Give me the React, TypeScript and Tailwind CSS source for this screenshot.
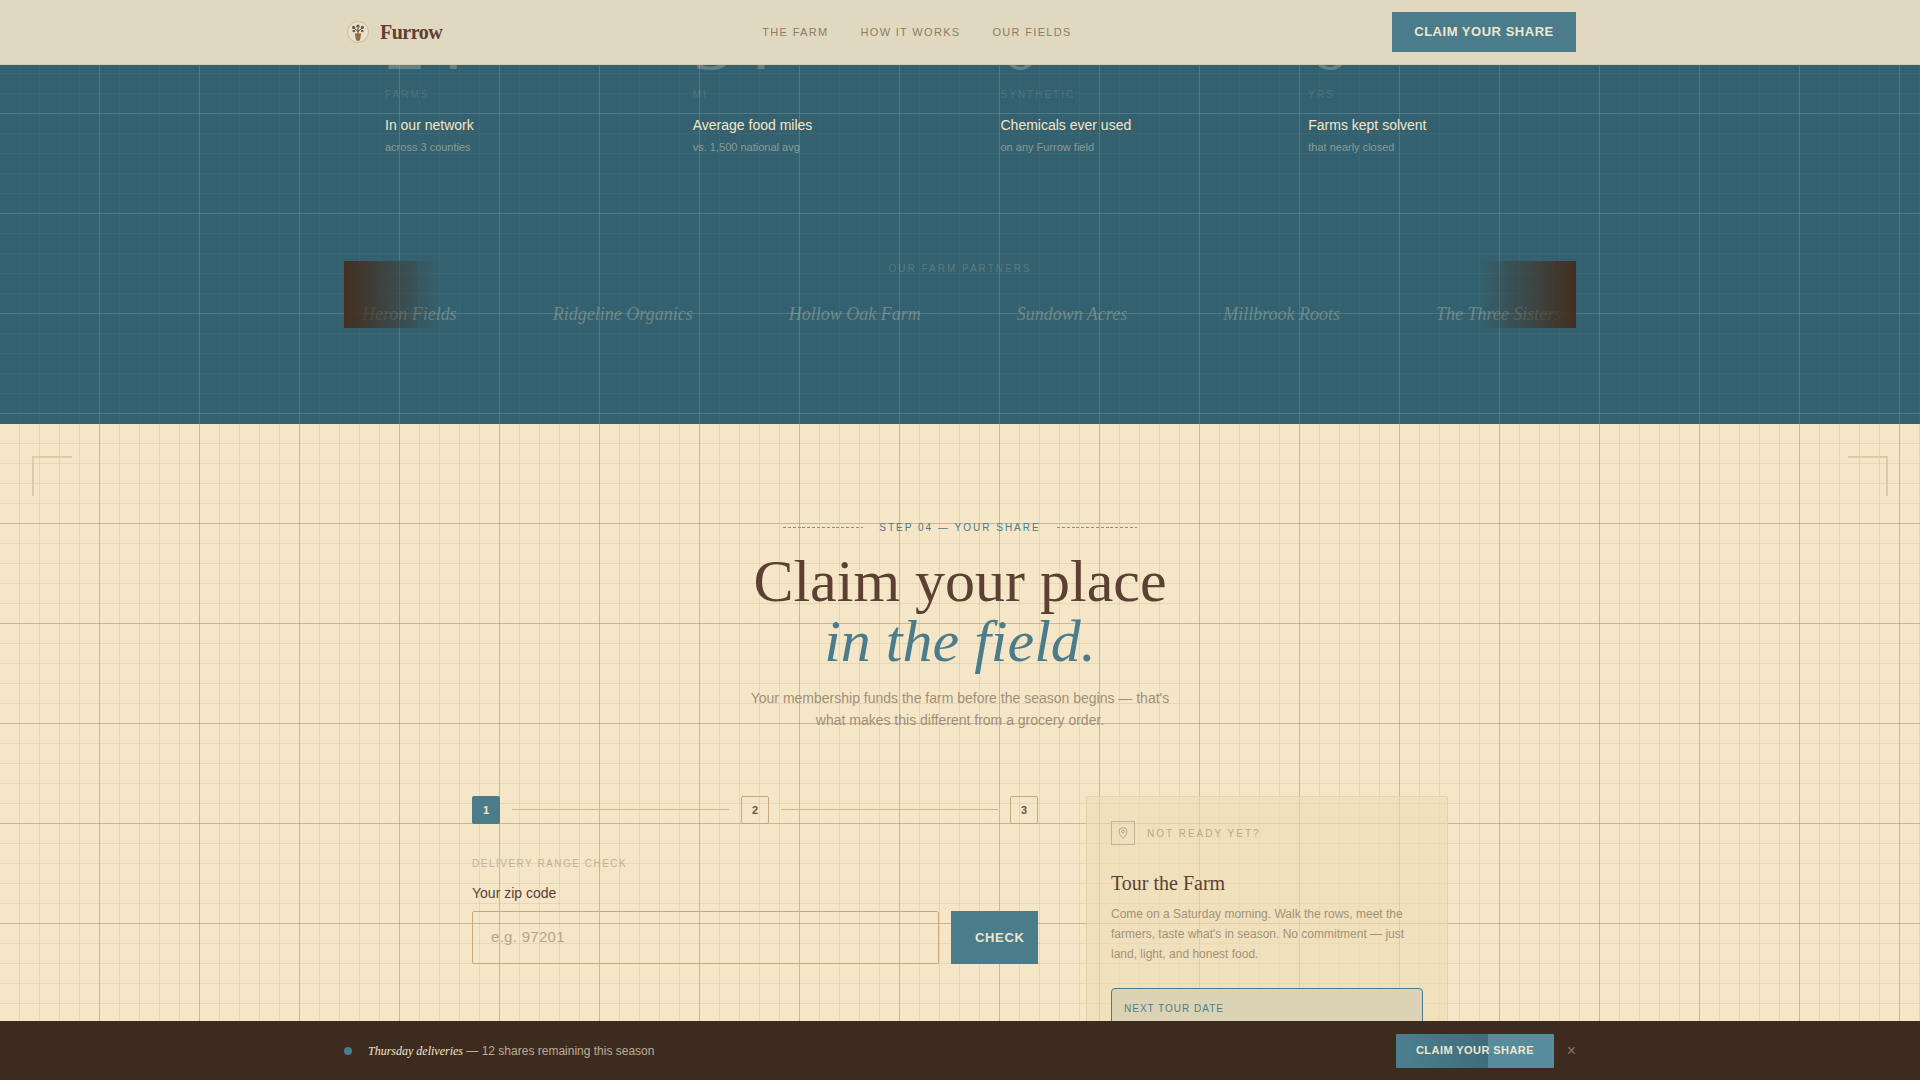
const stats = [
  { num: "24", unit: "FARMS", title: "In our network", note: "across 3 counties" },
  { num: "34", unit: "MI", title: "Average food miles", note: "vs. 1,500 national avg" },
  { num: "0", unit: "SYNTHETIC", title: "Chemicals ever used", note: "on any Furrow field" },
  { num: "6", unit: "YRS", title: "Farms kept solvent", note: "that nearly closed" },
];

const partners = [
  "Heron Fields",
  "Ridgeline Organics",
  "Hollow Oak Farm",
  "Sundown Acres",
  "Millbrook Roots",
  "The Three Sisters",
];

const links = ["THE FARM", "HOW IT WORKS", "OUR FIELDS"];

function Logo() {
  return (
    <svg width="24" height="24" viewBox="0 0 24 24" fill="none" aria-hidden="true">
      <circle cx="12" cy="12" r="10.5" fill="#e9e0c9" stroke="#c4b494" strokeWidth="0.8" />
      <path d="M8.8 13.6h6.4l-.9 5.2a2.3 2.3 0 0 1-4.6 0z" fill="#8b6f47" />
      <path d="M12 14V8M12 11.5 8 8M12 11.5 16 8" stroke="#5c4033" strokeWidth="1" />
      <circle cx="7.6" cy="7.4" r="1.6" fill="#6b5a48" />
      <circle cx="12" cy="6.2" r="1.6" fill="#6b5a48" />
      <circle cx="16.4" cy="7.4" r="1.6" fill="#6b5a48" />
      <circle cx="7.8" cy="11" r="1.3" fill="#6b5a48" />
      <circle cx="16.2" cy="11" r="1.3" fill="#6b5a48" />
    </svg>
  );
}

function Nav() {
  return (
    <header className="absolute top-0 left-0 right-0 z-20 h-[65px] bg-[#e1d8c0] border-b border-[#d3cab0]">
      <div className="w-[1232px] h-full mx-auto flex items-center justify-between">
        <div className="flex items-center gap-[10px] w-[98px] pl-[2px]">
          <span className="shrink-0 flex">
            <Logo />
          </span>
          <span className="font-['Liberation_Serif',serif] font-bold text-[20px] tracking-[-0.025em] text-[#5c4033]">
            Furrow
          </span>
        </div>
        <nav className="flex gap-8">
          {links.map((l) => (
            <span key={l} className="text-[11px] tracking-[0.12em] text-[#8b7d66]">
              {l}
            </span>
          ))}
        </nav>
        <button className="h-10 w-[184px] bg-[#4a7c8c] text-[#f0e6cc] text-[13px] font-bold tracking-[0.04em]">
          CLAIM YOUR SHARE
        </button>
      </div>
    </header>
  );
}

function Band() {
  return (
    <section className="-mt-[86px] h-[510px] pt-[88px] bg-[#34616f] bg-[linear-gradient(rgba(200,235,240,0.14)_1px,transparent_1px),linear-gradient(90deg,rgba(200,235,240,0.14)_1px,transparent_1px),linear-gradient(rgba(200,235,240,0.04)_1px,transparent_1px),linear-gradient(90deg,rgba(200,235,240,0.04)_1px,transparent_1px)] [background-size:100px_100px,100px_100px,20px_20px,20px_20px] [background-position:-1px_-1px]">
      <div className="w-[1232px] mx-auto">
        <div className="ml-px w-[1231px] grid grid-cols-4">
          {stats.map((s) => (
            <div key={s.title} className="pl-10">
              <div className="font-['Liberation_Serif',serif] text-[80px] leading-none text-[#f5e6c8]/25">
                {s.num}
              </div>
              <div className="mt-[4.5px] text-[10px] leading-[15px] tracking-[0.2em] text-[#f5e6c8]/15">
                {s.unit}
              </div>
              <div className="mt-[13px] text-[14px] leading-[21px] text-[#f5e6c8]">{s.title}</div>
              <div className="mt-[3.5px] text-[11px] leading-[16px] text-[#f5e6c8]/45">{s.note}</div>
            </div>
          ))}
        </div>

        <div className="relative mt-[106px] h-[67px] overflow-hidden">
          <div className="text-center text-[10px] leading-[15px] tracking-[0.2em] text-[#f5e6c8]/20">
            OUR FARM PARTNERS
          </div>
          <div className="mt-[24px] pl-[18px] flex gap-24 whitespace-nowrap">
            {partners.map((p) => (
              <span
                key={p}
                className="font-['Liberation_Serif',serif] italic text-[18px] leading-[28px] text-[#f5e6c8]/30"
              >
                {p}
              </span>
            ))}
          </div>
          <div className="absolute inset-y-0 left-0 w-[96px] bg-gradient-to-r from-[#432e20] to-transparent" />
          <div className="absolute inset-y-0 right-0 w-[96px] bg-gradient-to-l from-[#432e20] to-transparent" />
        </div>
      </div>
    </section>
  );
}

function Step({ n, active }: { n: number; active?: boolean }) {
  return (
    <div
      className={
        active
          ? "w-7 h-7 shrink-0 rounded-[2px] bg-[#4a7c8c] text-[#f5e6c8] text-[11px] font-bold flex items-center justify-center"
          : "w-7 h-7 shrink-0 rounded-[2px] border border-[#c4a97d] text-[#6f5440] text-[11px] font-bold flex items-center justify-center"
      }
    >
      {n}
    </div>
  );
}

function JoinForm() {
  return (
    <div>
      <div className="flex items-center gap-3">
        <Step n={1} active />
        <div className="flex-1 h-px bg-[#c9b48e]" />
        <Step n={2} />
        <div className="flex-1 h-px bg-[#c9b48e]" />
        <Step n={3} />
      </div>
      <div className="mt-8 text-[10px] leading-[15px] tracking-[0.15em] text-[#c0b090]">
        DELIVERY RANGE CHECK
      </div>
      <label className="block mt-3 text-[14px] leading-[21px] text-[#5c4033]">Your zip code</label>
      <div className="mt-[7px] flex gap-3">
        <input
          placeholder="e.g. 97201"
          className="w-[467px] h-[53px] px-[18px] pb-[2px] rounded-[2px] border border-[#c4a97d] bg-transparent text-[15px] tracking-[0.02em] outline-none placeholder:text-[#b8a488]"
        />
        <button className="w-[87px] h-[53px] pl-6 text-left bg-[#4a7c8c] text-[#f0e6cc] text-[13px] font-bold tracking-[0.05em]">
          CHECK
        </button>
      </div>
    </div>
  );
}

function TourCard() {
  return (
    <aside className="h-[320px] p-6 rounded-[2px] border border-[#e2d2ab] bg-[#eedcb4]/60">
      <div className="flex items-center gap-3">
        <div className="w-6 h-6 border border-[#c4b494] flex items-center justify-center">
          <svg width="10" height="12" viewBox="0 0 10 12" fill="none" aria-hidden="true">
            <path
              d="M5 11.3C3 9 1 7 1 4.6a4 4 0 0 1 8 0C9 7 7 9 5 11.3z"
              stroke="#a8967a"
              strokeWidth="0.8"
            />
            <circle cx="5" cy="4.6" r="1.4" stroke="#a8967a" strokeWidth="0.8" />
          </svg>
        </div>
        <span className="pt-px text-[10px] tracking-[0.2em] text-[#b8a888]">NOT READY YET?</span>
      </div>
      <h3 className="mt-6 font-['Liberation_Serif',serif] text-[20px] leading-[28px] text-[#5c4033]">
        Tour the Farm
      </h3>
      <p className="mt-[7.5px] text-[12px] leading-[20px] text-[#a39279]">
        Come on a Saturday morning. Walk the rows, meet the farmers, taste what's in season. No
        commitment — just land, light, and honest food.
      </p>
      <div className="mt-[23.5px] h-[120px] px-3 pt-3 rounded-[4px] border border-[#4a7c8c] bg-[#dcd3b5]">
        <div className="text-[10px] leading-[15px] tracking-[0.1em] text-[#4a7c8c]">
          NEXT TOUR DATE
        </div>
      </div>
    </aside>
  );
}

function ClaimSection() {
  return (
    <section className="relative h-[700px] pt-[96px] bg-[#f5e6c8] bg-[linear-gradient(rgba(139,111,71,0.3)_1px,transparent_1px),linear-gradient(90deg,rgba(139,111,71,0.3)_1px,transparent_1px),linear-gradient(rgba(139,111,71,0.13)_1px,transparent_1px),linear-gradient(90deg,rgba(139,111,71,0.13)_1px,transparent_1px)] [background-size:100px_100px,100px_100px,20px_20px,20px_20px] [background-position:-1px_-1px]">
      {/* Corner marks */}
      <div className="absolute top-8 left-8 w-10 h-10 border-t-2 border-l-2 border-[#dccaa8]" />
      <div className="absolute top-8 right-8 w-10 h-10 border-t-2 border-r-2 border-[#dccaa8]" />

      <div className="flex items-center justify-center gap-4">
        <div className="w-20 h-px bg-[repeating-linear-gradient(90deg,#7d9496_0_3px,transparent_3px_4.85px)]" />
        <span className="text-[10px] leading-[15px] tracking-[0.2em] text-[#4a7c8c]">
          STEP 04 — YOUR SHARE
        </span>
        <div className="w-20 h-px bg-[repeating-linear-gradient(90deg,#7d9496_0_3px,transparent_3px_4.85px)]" />
      </div>

      <h2 className="mt-4 text-center font-['Liberation_Serif',serif] font-normal text-[60px] leading-[60px] text-[#5c4033]">
        Claim your place
        <br />
        <em className="text-[#4a7c8c]">in the field.</em>
      </h2>

      <p className="mt-4 mx-auto w-[440px] text-center text-[14px] leading-[22.4px] text-[#a08f78]">
        Your membership funds the farm before the season begins — that's what makes this different
        from a grocery order.
      </p>

      <div className="mt-16 mx-auto w-[976px] grid grid-cols-[566px_362px] gap-12">
        <JoinForm />
        <TourCard />
      </div>
    </section>
  );
}

function BottomBar() {
  return (
    <div className="fixed bottom-0 left-0 right-0 z-20 h-[59px] bg-[#3d2b1f]">
      <div className="w-[1232px] h-full mx-auto flex items-center justify-between">
        <div className="flex items-center gap-4">
          <span className="w-2 h-2 rounded-full bg-[#4a7c8c]" />
          <span className="text-[12px] text-[#f5e6c8]/70">
            <em className="font-['Liberation_Serif',serif] text-[12px] text-[#f5e6c8]">
              Thursday deliveries
            </em>{" "}
            — 12 shares remaining this season
          </span>
        </div>
        <div className="flex items-center gap-3">
          <button className="w-[158px] h-[34px] rounded-[1px] bg-[linear-gradient(90deg,#4b7f90_0%,#3f6d7d_58%,#578c9d_58%,#578c9d_100%)] text-[#f0e6cc] text-[11px] font-bold tracking-[0.04em]">
            CLAIM YOUR SHARE
          </button>
          <span className="w-[10px] flex justify-end text-[16px] leading-none text-[#f5e6c8]/40">×</span>
        </div>
      </div>
    </div>
  );
}

export default function App() {
  return (
    <div className="relative h-[1080px] overflow-hidden font-['Liberation_Sans',sans-serif]">
      <Nav />
      <Band />
      <ClaimSection />
      <BottomBar />
    </div>
  );
}
